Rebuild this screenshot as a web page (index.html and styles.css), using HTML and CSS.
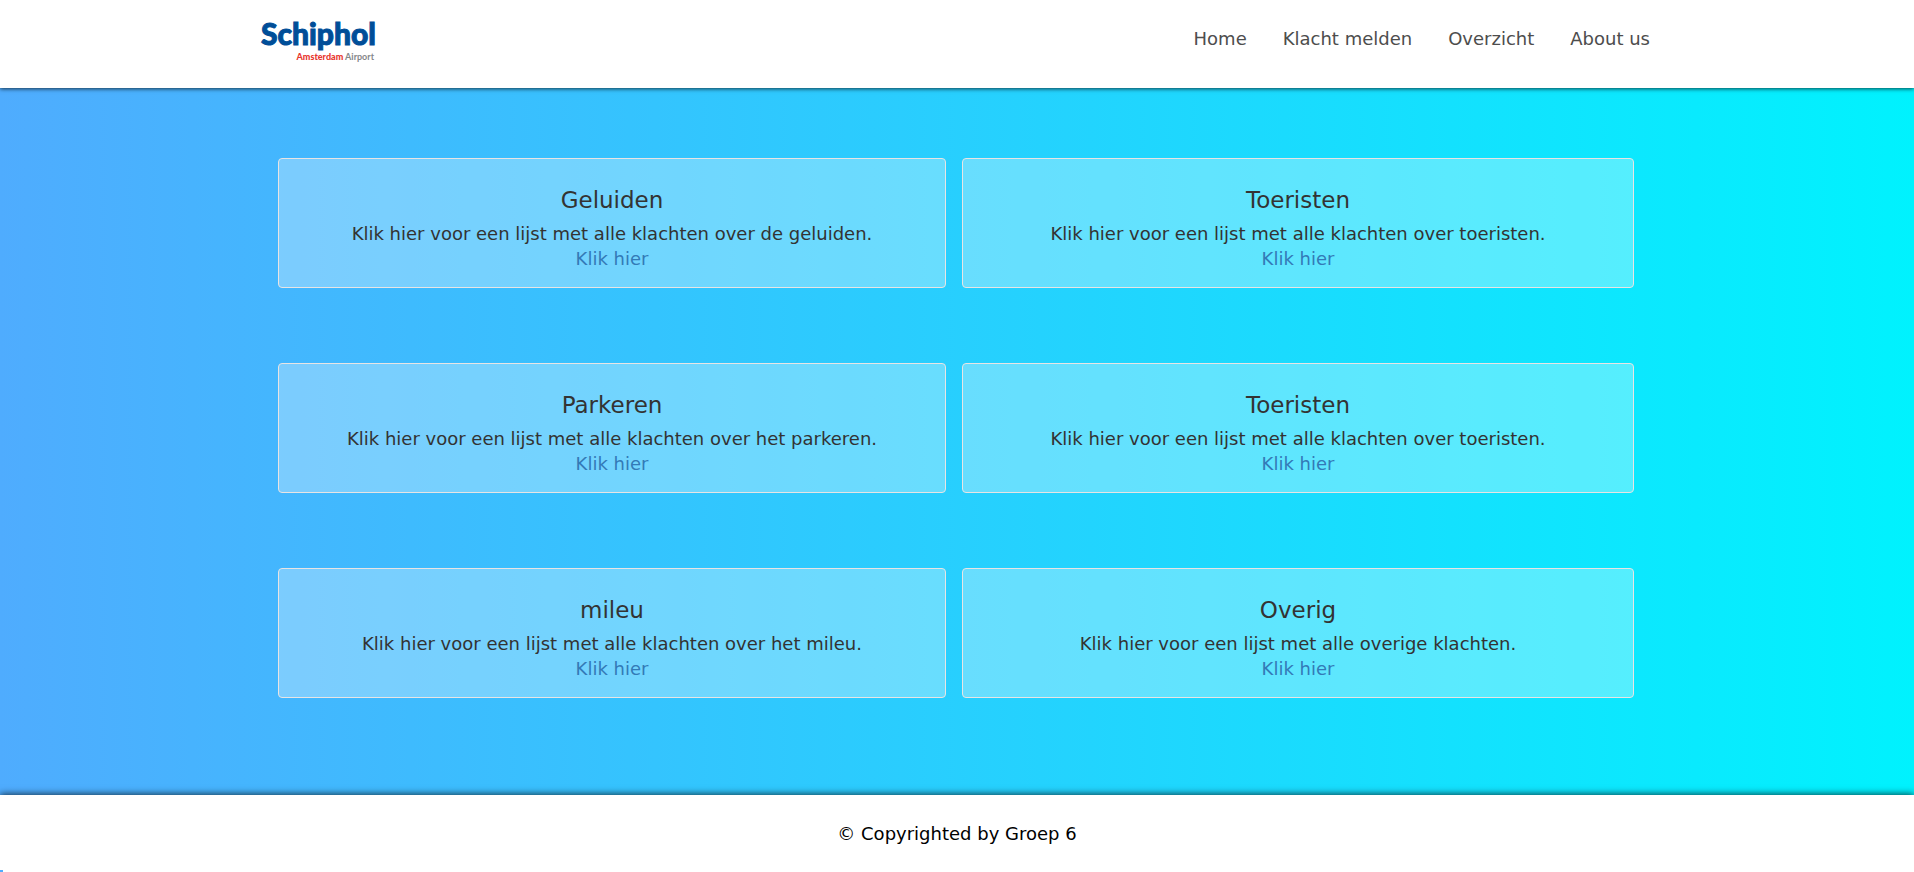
FILE: index.html
```html
<!DOCTYPE html>
<html lang="nl">
<head>
  <meta charset="utf-8">
  <title>Schiphol klachten</title>
  <link rel="stylesheet" href="styles.css">
</head>
<body>
  <header class="site-header">
    <div class="header-inner">
      <a class="logo" href="#" aria-label="Schiphol Amsterdam Airport">
        <svg class="logo-image" viewBox="0 0 114 46" role="img" aria-hidden="true">
          <text class="logo-name" x="-1" y="29">Schiphol</text>
          <text class="logo-tag" x="112" y="44" text-anchor="end"><tspan class="logo-city">Amsterdam</tspan> Airport</text>
        </svg>
      </a>
      <nav class="site-nav">
        <a href="#">Home</a>
        <a href="#">Klacht melden</a>
        <a href="#">Overzicht</a>
        <a href="#">About us</a>
      </nav>
    </div>
  </header>

  <main class="content">
    <div class="cards">
      <section class="card">
        <h2>Geluiden</h2>
        <p>Klik hier voor een lijst met alle klachten over de geluiden.</p>
        <a href="#">Klik hier</a>
      </section>
      <section class="card">
        <h2>Toeristen</h2>
        <p>Klik hier voor een lijst met alle klachten over toeristen.</p>
        <a href="#">Klik hier</a>
      </section>
      <section class="card">
        <h2>Parkeren</h2>
        <p>Klik hier voor een lijst met alle klachten over het parkeren.</p>
        <a href="#">Klik hier</a>
      </section>
      <section class="card">
        <h2>Toeristen</h2>
        <p>Klik hier voor een lijst met alle klachten over toeristen.</p>
        <a href="#">Klik hier</a>
      </section>
      <section class="card">
        <h2>mileu</h2>
        <p>Klik hier voor een lijst met alle klachten over het mileu.</p>
        <a href="#">Klik hier</a>
      </section>
      <section class="card">
        <h2>Overig</h2>
        <p>Klik hier voor een lijst met alle overige klachten.</p>
        <a href="#">Klik hier</a>
      </section>
    </div>
  </main>

  <footer class="site-footer">
    <p>© Copyrighted by Groep 6</p>
  </footer>
</body>
</html>
```

FILE: styles.css
```css
* {
  box-sizing: border-box;
}

body {
  display: flex;
  flex-direction: column;
  min-height: 100vh;
  margin: 0;
  font-family: Verdana, "DejaVu Sans", sans-serif;
  font-size: 18px;
  line-height: 25px;
  color: #333;
  background: linear-gradient(to right, #4facfe, #00f2fe);
}

h2,
p {
  margin: 0;
}

a {
  text-decoration: none;
}

.site-header {
  background: #fff;
  box-shadow: 0 1px 4px rgba(0, 0, 0, 0.7);
}

.header-inner {
  display: flex;
  justify-content: space-between;
  align-items: flex-start;
  max-width: 1390px;
  height: 88px;
  margin: 0 auto;
  padding: 16px 2px 0 0;
}

.logo-image {
  display: block;
  width: 114px;
  height: 46px;
  overflow: visible;
}

.logo-name {
  font: 900 30px Lato, sans-serif;
  fill: #004e98;
  stroke: #004e98;
  stroke-width: 1;
}

.logo-tag {
  font: 700 9px Lato, sans-serif;
  fill: #85878a;
}

.logo-city {
  font-weight: 900;
  fill: #e8382f;
}

.site-nav {
  display: flex;
  gap: 36px;
  padding-top: 10px;
}

.site-nav a {
  color: #4d4d4d;
}

.content {
  flex: 1;
  padding: 70px 26px 90px 24px;
}

.cards {
  display: grid;
  grid-template-columns: 668fr 672fr;
  gap: 75px 16px;
  max-width: 1356px;
  margin: 0 auto;
}

.card {
  padding: 27px 16px 16px;
  text-align: center;
  background: rgba(255, 255, 255, 0.3);
  border: 1px solid #e8e4e4;
  border-radius: 4px;
}

.card h2 {
  margin-bottom: 7px;
  font-size: 23px;
  font-weight: 400;
  line-height: 28px;
}

.card a {
  color: #337ab7;
}

.site-footer {
  position: relative;
  padding: 26px 16px;
  text-align: center;
  color: #000;
  background: #fff;
  box-shadow: 0 -1px 7px rgba(0, 0, 0, 0.7);
}

.site-footer::after {
  content: "";
  position: absolute;
  bottom: 0;
  left: 0;
  width: 3px;
  height: 2px;
  background: #4facfe;
}
```
